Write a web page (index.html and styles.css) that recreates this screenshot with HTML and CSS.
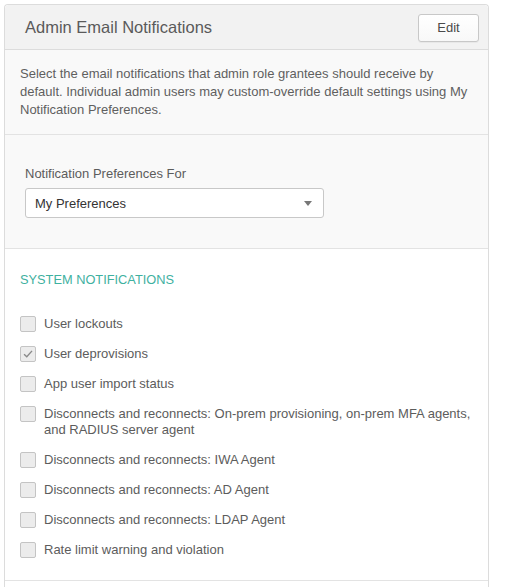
FILE: index.html
```html
<!DOCTYPE html>
<html lang="en">
<head>
<meta charset="utf-8">
<title>Admin Email Notifications</title>
<link rel="stylesheet" href="styles.css">
</head>
<body>
<section class="panel">
  <header class="panel-head">
    <h2 class="panel-title">Admin Email Notifications</h2>
    <button class="btn" type="button">Edit</button>
  </header>
  <div class="panel-desc">
    Select the email notifications that admin role grantees should receive by default. Individual admin users may custom-override default settings using My Notification Preferences.
  </div>
  <div class="panel-select">
    <label class="field-label">Notification Preferences For</label>
    <div class="select">
      <span>My Preferences</span>
      <span class="caret"></span>
    </div>
  </div>
  <div class="panel-list">
    <h3 class="section-title">SYSTEM NOTIFICATIONS</h3>
    <ul class="checks">
      <li><span class="box"></span><span>User lockouts</span></li>
      <li><span class="box checked"><svg viewBox="0 0 16 16" width="16" height="16"><path d="M3.5 8.2 L6.6 11.2 L12.6 4.4" fill="none" stroke="#8a8a8a" stroke-width="1.6"/></svg></span><span>User deprovisions</span></li>
      <li><span class="box"></span><span>App user import status</span></li>
      <li><span class="box"></span><span>Disconnects and reconnects: On-prem provisioning, on-prem MFA agents, and RADIUS server agent</span></li>
      <li><span class="box"></span><span>Disconnects and reconnects: IWA Agent</span></li>
      <li><span class="box"></span><span>Disconnects and reconnects: AD Agent</span></li>
      <li><span class="box"></span><span>Disconnects and reconnects: LDAP Agent</span></li>
      <li><span class="box"></span><span>Rate limit warning and violation</span></li>
    </ul>
  </div>
</section>
</body>
</html>
```
FILE: styles.css
```css
html, body {
  margin: 0;
  padding: 0;
  background: #fff;
}
body {
  padding: 4px 0 0 4px;
  font-family: "Liberation Sans", Arial, sans-serif;
  color: #5c5c5c;
  font-size: 13px;
}
.panel {
  width: 485px;
  border: 1px solid #dcdcdc;
  border-bottom: none;
  border-radius: 4px 4px 0 0;
  height: 600px;
  box-sizing: border-box;
  background: #fff;
}
.panel-head {
  display: flex;
  align-items: center;
  justify-content: space-between;
  height: 44px;
  padding: 0 9px 0 20px;
  background: #f2f2f2;
  border-bottom: 1px solid #dcdcdc;
  border-radius: 4px 4px 0 0;
}
.panel-title {
  margin: 0;
  font-weight: normal;
  font-size: 16.5px;
  color: #5a5a5a;
}
.btn {
  width: 61px;
  height: 28px;
  margin-top: 1px;
  background: linear-gradient(#fff, #f8f8f8);
  border: 1px solid #c8c8c8;
  border-radius: 3px;
  font-family: inherit;
  font-size: 13px;
  color: #4a4a4a;
  box-shadow: 0 1px 0 rgba(0,0,0,0.04);
}
.panel-desc {
  background: #f9f9f9;
  padding: 15px 15px 15px 15px;
  line-height: 18px;
  color: #5f5f5f;
  border-bottom: 1px solid #e3e3e3;
}
.panel-select {
  background: #f9f9f9;
  padding: 31px 20px 30px 20px;
  border-bottom: 1px solid #e3e3e3;
}
.field-label {
  display: block;
  margin-bottom: 6px;
  line-height: 16px;
}
.select {
  display: flex;
  align-items: center;
  justify-content: space-between;
  width: 299px;
  height: 30px;
  box-sizing: border-box;
  padding: 0 11px 0 9px;
  background: #fff;
  border: 1px solid #c8c8c8;
  border-radius: 3px;
  color: #333;
}
.caret {
  width: 0;
  height: 0;
  border-left: 4px solid transparent;
  border-right: 4px solid transparent;
  border-top: 5px solid #777;
}
.panel-list {
  padding: 22px 15px 8px 15px;
  border-bottom: 1px solid #e3e3e3;
}
.section-title {
  margin: 0 0 27px 0;
  font-weight: normal;
  font-size: 12.8px;
  color: #3fb19f;
  line-height: 18px;
}
.checks {
  list-style: none;
  margin: 0;
  padding: 0;
}
.checks li {
  display: flex;
  align-items: flex-start;
  gap: 8px;
  margin-bottom: 14px;
  line-height: 16px;
}
.box {
  flex: none;
  width: 16px;
  height: 16px;
  box-sizing: border-box;
  border: 1px solid #c4c4c4;
  border-radius: 2px;
  background: #ececec;
  display: flex;
  align-items: center;
  justify-content: center;
}
.box svg {
  display: block;
}
```
